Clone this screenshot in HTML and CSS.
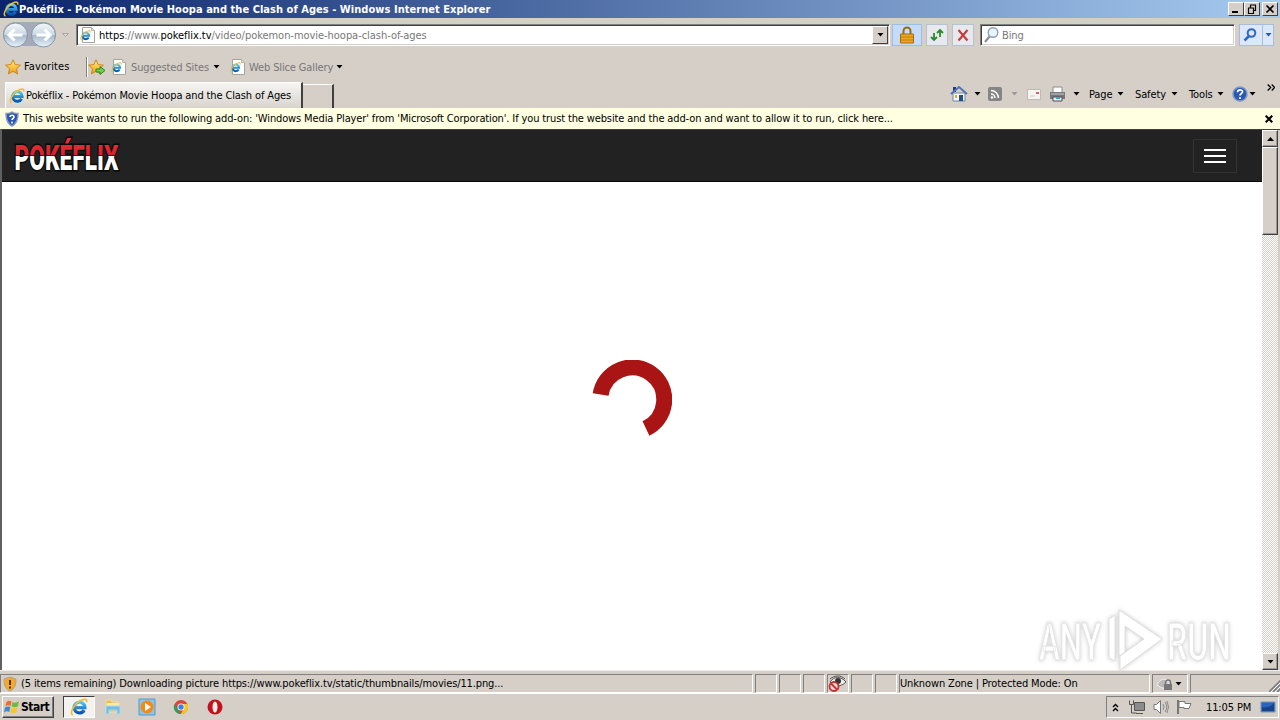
FILE: index.html
```html
<!DOCTYPE html>
<html lang="en">
<head>
<meta charset="utf-8">
<title>Pokéflix - Pokémon Movie Hoopa and the Clash of Ages</title>
<link rel="stylesheet" href="styles.css">
</head>
<body>
<svg width="0" height="0" class="defs">
  <defs>
    <linearGradient id="blue" x1="0" y1="0" x2="0" y2="1"><stop offset="0" stop-color="#55c8f8"/><stop offset="1" stop-color="#0755b0"/></linearGradient>
    <linearGradient id="gold" x1="0" y1="0" x2="0" y2="1"><stop offset="0" stop-color="#fff18a"/><stop offset="1" stop-color="#f29a0a"/></linearGradient>
    <linearGradient id="orb" x1="0" y1="0" x2="0" y2="1"><stop offset="0" stop-color="#f4f8fb"/><stop offset=".48" stop-color="#cbd7e2"/><stop offset=".5" stop-color="#a3b6c8"/><stop offset="1" stop-color="#eaf4fc"/></linearGradient>
    <linearGradient id="duo" gradientUnits="userSpaceOnUse" x1="0" y1="4" x2="0" y2="36"><stop offset="0" stop-color="#e8323a"/><stop offset=".49" stop-color="#d3222c"/><stop offset=".49" stop-color="#222"/><stop offset=".54" stop-color="#222"/><stop offset=".54" stop-color="#fff"/><stop offset="1" stop-color="#fff"/></linearGradient>
    <symbol id="ie" viewBox="0 0 16 16"><path d="M12.600 10.800A4.800 4.800 0 1 1 13.200 8.500H5" fill="none" stroke="url(#blue)" stroke-width="2.900"/><path d="M2.500 15C-1 14 3.500 5 10 2c3.500-1.600 5.500-1 4.600 1.800" fill="none" stroke="#f3bd28" stroke-width="1.500"/></symbol>
    <symbol id="page" viewBox="0 0 16 16"><path d="M2.500.500h9l3 3v12h-12z" fill="#fff" stroke="#a5a39d"/><path d="M11.500.500v3h3" fill="#ddd" stroke="#b5b3ad"/><use href="#ie" x="0" y="3" width="11" height="11"/></symbol>
    <symbol id="star" viewBox="0 0 16 16"><path d="M8 .8l2.200 4.800 5.200.600-3.900 3.500 1.100 5.200L8 12.300l-4.600 2.600 1.100-5.200L.6 6.200l5.200-.6z" fill="url(#gold)" stroke="#cf8612"/></symbol>
    <symbol id="down" viewBox="0 0 7 4"><path d="M.5 0h6L3.500 3.500z" fill="currentColor"/></symbol>
  </defs>
</svg>

<header class="titlebar">
  <svg class="i16"><use href="#ie"/></svg>
  <span class="title">Pokéflix - Pokémon Movie Hoopa and the Clash of Ages - Windows Internet Explorer</span>
  <div class="winbtns">
    <span class="wb"><svg width="12" height="10"><path d="M2 8h6" stroke="#000" stroke-width="2"/></svg></span>
    <span class="wb"><svg width="12" height="10"><path d="M4 1h6M4.500 1v3M9.500 1v5.500H8M2 4h6M2.500 4v5.500h5V4" fill="none" stroke="#000" stroke-width="1.200"/></svg></span>
    <span class="wb gap"><svg width="12" height="10"><path d="M2.500 1.500l7 7m0-7l-7 7" stroke="#000" stroke-width="1.700"/></svg></span>
  </div>
</header>

<div class="navrow">
  <svg class="orbs" width="74" height="30">
    <rect x="3" y="2" width="53" height="24" rx="12" fill="#a6aab8"/>
    <circle cx="15.500" cy="15" r="12" fill="url(#orb)" stroke="#8796a8"/><circle cx="43.500" cy="15" r="12" fill="url(#orb)" stroke="#8796a8"/>
    <path d="M22.500 15h-13m5-5.500L9 15l5.500 5.500" fill="none" stroke="#fff" stroke-width="3"/><path d="M36.500 15h13m-5-5.500L50 15l-5.500 5.500" fill="none" stroke="#fff" stroke-width="3"/>
    <path d="M62.500 13.500h6l-3 3z" fill="#ddd" stroke="#aaa69f"/>
  </svg>
  <div class="address field">
    <svg class="i16"><use href="#page"/></svg>
    <span class="url"><b>https</b>://www.<b>pokeflix.tv</b>/video/pokemon-movie-hoopa-clash-of-ages</span>
    <span class="drop"><svg width="7" height="4"><use href="#down"/></svg></span>
  </div>
  <span class="tool lock"><svg width="16" height="18"><path d="M4.500 8V5a3.500 3.500 0 0 1 7 0v3" fill="none" stroke="#9a6a10" stroke-width="2"/><path d="M1.500 8h13v9h-13z" fill="#eda71f" stroke="#a66c0b"/><path d="M2 11h12M2 14h12" stroke="#c57d0c"/></svg></span>
  <span class="tool"><svg width="16" height="16"><path d="M5 10V3M2 6l3-3 3 3M11 6v7M8 10l3 3 3-3" transform="matrix(-1 0 0 1 16 0)" fill="none" stroke="#2b8a2e" stroke-width="1.800"/></svg></span>
  <span class="tool"><svg width="16" height="16"><path d="M3.500 3l9 10.500M12.500 3l-9 10.500" stroke="#c93c3c" stroke-width="2.200"/></svg></span>
  <div class="search field">
    <svg width="17" height="18"><circle cx="10" cy="6.500" r="4.800" fill="#e7f4fd" stroke="#8ca0b4" stroke-width="1.400"/><path d="M6.500 10.500L2 16" stroke="#8b8b8b" stroke-width="2"/></svg>
    <span>Bing</span>
  </div>
  <span class="go"><svg width="22" height="18"><circle cx="11.500" cy="7" r="3.800" fill="none" stroke="#2c67c9" stroke-width="2"/><path d="M9 10l-4.500 4.500" stroke="#2c67c9" stroke-width="2.500"/></svg><i><svg width="7" height="4"><use href="#down"/></svg></i></span>
</div>

<div class="favrow">
  <svg class="i16"><use href="#star"/></svg>
  <span class="favs">Favorites</span>
  <span class="sep"></span>
  <svg class="i18" viewBox="0 0 18 16"><use href="#star" width="16" height="16"/><path d="M8 10h4V7.500l5 4-5 4V13H8z" fill="#6ed04b" stroke="#268b22"/></svg>
  <svg class="i16 pg"><use href="#page"/></svg>
  <span class="sugg">Suggested Sites</span>
  <svg width="7" height="4"><use href="#down"/></svg>
  <svg class="i16 pg2"><use href="#page"/></svg>
  <span class="slice">Web Slice Gallery</span>
  <svg width="7" height="4"><use href="#down"/></svg>
</div>

<div class="tabrow">
  <div class="tab"><svg class="i16"><use href="#ie"/></svg><span>Pokéflix - Pokémon Movie Hoopa and the Clash of Ages</span></div>
  <div class="newtab"></div>
  <div class="cmds">
    <svg width="18" height="18"><path d="M3 8h12v8H3z" fill="#f4f7fb" stroke="#7284a4"/><path d="M3 2h3v5H3z" fill="#26377d"/><path d="M1 9l8-7 8 7" fill="none" stroke="#5275af" stroke-width="2"/><path d="M9 10h4v6H9z" fill="#24517c"/><path d="M5 10h2v3H5z" fill="#e8a52d"/></svg>
    <svg class="c1" width="7" height="4"><use href="#down"/></svg>
    <svg class="c2" width="14" height="14"><rect width="14" height="14" rx="2" fill="#858585"/><path d="M3 7a4 4 0 0 1 4 4M3 3.500A7.500 7.500 0 0 1 10.500 11" fill="none" stroke="#fff" stroke-width="1.500"/><circle cx="4" cy="10.500" r="1.300" fill="#fff"/></svg>
    <svg class="c3" width="7" height="4"><use href="#down"/></svg>
    <svg class="c4" width="14" height="11"><path d="M.5.500h13v10H.5z" fill="#f5f4f3" stroke="#bdb9b4"/><path d="M9 3h3v2H9z" fill="#d4606c"/><path d="M3 7h5" stroke="#c8c8c8"/></svg>
    <svg class="c5" width="17" height="16"><path d="M4 1h9v6H4z" fill="#fff" stroke="#8b8b8b"/><path d="M1 6h15v7H1z" fill="#77797c"/><path d="M2 8h13" stroke="#c6cacc"/><path d="M4 11h9v4H4z" fill="#eee" stroke="#4d5256"/><path d="M7 12h4" stroke="#38a2d5" stroke-width="2"/></svg>
    <svg class="c6" width="7" height="4"><use href="#down"/></svg>
    <span class="cpage">Page</span><svg width="7" height="4"><use href="#down"/></svg>
    <span class="csafe">Safety</span><svg width="7" height="4"><use href="#down"/></svg>
    <span class="ctool">Tools</span><svg width="7" height="4"><use href="#down"/></svg>
    <svg class="c7" width="16" height="16"><circle cx="8" cy="8" r="7" fill="#2858b8" stroke="#8599bf" stroke-width="1.500"/><path d="M5.500 6.300C5.500 3 10.700 3.300 10.500 6 10.400 7.500 8 7.500 8 9.500M8 11v2" fill="none" stroke="#fff" stroke-width="1.700"/></svg>
    <svg width="7" height="4"><use href="#down"/></svg>
    <svg class="chev" width="8" height="7"><path d="M.7.500l3 3-3 3M4.700.500l3 3-3 3" fill="none" stroke="#000" stroke-width="1.300"/></svg>
  </div>
</div>

<div class="infobar">
  <svg class="i16" viewBox="0 0 16 16"><path d="M8 1c2 1.500 4 1.700 6 1.500 0 6-1 10-6 12.500C3 12.500 2 8.500 2 2.500 4 2.700 6 2.500 8 1z" fill="#2a57b6" stroke="#8b9ab8" stroke-width="1.500"/><path d="M6 6c0-2.500 4-2.300 4 0 0 1.500-2 1.500-2 3M8 10.500v2" fill="none" stroke="#fff" stroke-width="1.600"/></svg>
  <span>This website wants to run the following add-on: 'Windows Media Player' from 'Microsoft Corporation'. If you trust the website and the add-on and want to allow it to run, click here...</span>
  <svg class="x" width="8" height="8"><path d="M.7.700l6.600 6.600m0-6.600L.7 7.300" stroke="#000" stroke-width="2.100"/></svg>
</div>

<div class="view">
  <main class="site">
    <nav class="navbar">
      <svg class="logo" width="110" height="42"><text x="1.500" y="34.500" textLength="104" lengthAdjust="spacingAndGlyphs">POKÉFLIX</text></svg>
      <button class="burger"><i></i><i></i><i></i></button>
    </nav>
    <svg class="spinner" width="80" height="80"><path d="M8.650 34.470A32 32 0 1 1 53.960 68.400" fill="none" stroke="#a91414" stroke-width="16"/></svg>
    <svg class="watermark" width="204" height="70">
      <g class="wmtext"><text x="4" y="52" textLength="62" lengthAdjust="spacingAndGlyphs">ANY</text><text x="132" y="52" textLength="64" lengthAdjust="spacingAndGlyphs">RUN</text></g>
      <path class="wmshape" fill-rule="evenodd" d="M74 50V11l6-4v46zM84 2l43 29-42 31V48l24-17-19-13v26l-6 4z"/>
    </svg>
  </main>
  <aside class="scroll">
    <span class="sbtn"><svg width="7" height="4"><path d="M0 4h7L3.500 0z"/></svg></span>
    <span class="thumb"></span>
    <span class="sbtn end"><svg width="7" height="4"><use href="#down"/></svg></span>
  </aside>
</div>

<div class="status">
  <div class="cell msg"><svg class="i16" viewBox="0 0 16 16"><path d="M8 1l6 2c0 6-1 9.500-6 12C3 12.500 2 9 2 3z" fill="#f4aa22" stroke="#a8a29a"/><path d="M8 4v5M8 10.500v2" stroke="#5c2d00" stroke-width="2"/></svg><span>(5 items remaining) Downloading picture https://www.pokeflix.tv/static/thumbnails/movies/11.png...</span></div>
  <div class="cell sm"></div><div class="cell sm"></div><div class="cell sm"></div>
  <div class="cell sm"><svg width="20" height="18"><path d="M2 7c4-6 11-6 16 0-5 5-11 5-16 0z" fill="#eee" stroke="#555"/><circle cx="10" cy="6" r="3" fill="#333"/><path d="M2 4c5-4 11-4 15 0" fill="none" stroke="#555"/><circle cx="6" cy="11.500" r="4.500" fill="#f3dede" stroke="#c9302c" stroke-width="1.800"/><path d="M3 8.500l6 6" stroke="#c9302c" stroke-width="1.800"/></svg></div>
  <div class="cell sm"></div><div class="cell sm"></div>
  <div class="cell zone"><span>Unknown Zone | Protected Mode: On</span></div>
  <div class="cell prot"><svg width="18" height="16"><path d="M1 9c3-6 7-7 11-4v7H6z" fill="#b9b9b9" stroke="#efefef"/><path d="M9.500 9V6.500a2.500 2.500 0 0 1 5 0V9" fill="none" stroke="#777" stroke-width="1.400"/><path d="M8 8h8v6H8z" fill="#777"/></svg><svg class="d" width="7" height="4"><use href="#down"/></svg></div>
  <div class="cell last"><svg width="12" height="12"><path d="M0 12L12 0M4 12l8-8M8 12l4-4" stroke="#808080" stroke-width="1.800"/><path d="M2 12L12 2M6 12l6-6" stroke="#fff"/></svg></div>
</div>

<footer class="taskbar">
  <div class="start"><svg width="16" height="16"><path d="M2.500 3Q5 1 7.500 2.500L6.500 7Q4 5.500 1.300 7.500z" fill="#ef6a2f"/><path d="M8.500 3Q11 4.500 15 2.500L13.800 7.500Q11 9 7.500 7.500z" fill="#75b83c"/><path d="M1 8.500Q4 6.700 6.300 8L5.300 13Q2.500 11.500 0 13.500z" fill="#3e87d8"/><path d="M7.300 8.700Q10 10 13.500 8.500L12.300 13.500Q9 15 6.200 13.500z" fill="#f8c536"/></svg><span>Start</span></div>
  <div class="task"><svg width="18" height="18"><use href="#ie"/></svg></div>
  <svg class="t1" width="18" height="18"><path d="M2 2h5l1 2h7v10H2z" fill="#e9bd56" stroke="#f6e09a"/><path d="M3 5h12v5H3z" fill="#fbe9a6"/><path d="M2 8h14v8h-3v-4H5v4H2z" fill="#75bce0" stroke="#a7dcf2"/></svg>
  <svg class="t2" width="18" height="18"><path d="M1 1h16v16H1z" fill="#8cc4e8" stroke="#4d9cd0"/><circle cx="9" cy="9" r="6.500" fill="#f48a14"/><path d="M7 5l6 4-6 4z" fill="#fff"/></svg>
  <svg class="t3" width="16" height="16"><circle cx="8" cy="8" r="7" fill="#df4436"/><path d="M1.500 5L6 12l2 3A7 7 0 0 1 1.500 5z" fill="#26a15a"/><path d="M8 5h6.400A7 7 0 0 1 8 15l3-6z" fill="#f8c91c"/><circle cx="8" cy="8" r="3.500" fill="#fff"/><circle cx="8" cy="8" r="2.700" fill="#3e80e8"/></svg>
  <svg class="t4" width="16" height="16"><ellipse cx="8" cy="8" rx="7.500" ry="7.500" fill="#c3121c"/><ellipse cx="8" cy="8" rx="2.500" ry="5.500" fill="#eee"/></svg>
  <div class="tray">
    <svg class="y0" width="7" height="9"><path d="M1 4l2.500-2.500L6 4M1 8l2.500-2.500L6 8" fill="none" stroke="#000" stroke-width="1.400"/></svg>
    <svg class="y1" width="16" height="16"><path d="M5.500 3.500h10v8h-10z" fill="#8b8b8b" stroke="#fff"/><path d="M5.500 3.500h10v8h-10zM7 14.500h7M.5 1.500v4h4v-4M2.500 5v9h5" fill="none" stroke="#555"/></svg>
    <svg class="y2" width="16" height="16"><path d="M1 5.500h2.500L7.500 1.500v13L3.500 10.500H1z" fill="#fff" stroke="#777"/><path d="M10 5q2 3 0 6M12 3q3.500 5 0 10M14 2q3 6 0 12" fill="none" stroke="#888"/></svg>
    <svg class="y3" width="17" height="16"><path d="M2 1v14" stroke="#777" stroke-width="2"/><path d="M3 2.500h6v2h6l-2 5H8v-1H3z" fill="#fff" stroke="#777"/></svg>
    <span class="clock">11:05 PM</span>
    <svg class="y4" width="16" height="13"><path d="M1 1h14v10H1z" fill="#2865c1" stroke="#7792b5"/><path d="M2 6q7 2 12-4v8H2z" fill="#174389"/></svg>
  </div>
</footer>
</body>
</html>
```
FILE: styles.css
```css
*{box-sizing:border-box}
body{margin:0;width:1280px;height:720px;overflow:hidden;display:flex;flex-direction:column;background:#d5cfc8;color:#000;font:11px/14px "DejaVu Sans Condensed","DejaVu Sans",sans-serif;font-stretch:condensed;letter-spacing:-.13px}
.defs{position:absolute}
svg{display:block;flex:none}
span{white-space:nowrap}
.i16{width:16px;height:16px}
.i18{width:18px;height:16px}
.titlebar{height:18px;flex:none;display:flex;align-items:center;padding:0 2px 0 3px;background:linear-gradient(90deg,#0a246a,#a6caf0)}
.title{color:#fff;font-weight:bold;letter-spacing:.04px;flex:1;padding-top:1px}
.winbtns{display:flex}
.wb{width:16px;height:14px;background:#d5cfc8;border:1px solid;border-color:#fff #404040 #404040 #fff;display:flex;align-items:center;justify-content:center}
.gap{margin-left:2px}
.navrow{height:36px;flex:none;display:flex;align-items:flex-start;padding:6px 0 0 0}
.orbs{margin-top:-4px;width:76px}
.field{background:#fff;height:22px;border:1px solid;border-color:#808080 #fff #fff #808080;box-shadow:inset 1px 1px #404040,inset -1px -1px #d5cfc8;display:flex;align-items:center;color:#777}
.field>span{padding-top:2px}
.address{width:814px;padding:0 1px 0 3px}
.url{margin-left:3px;flex:1;letter-spacing:-.04px}
.url b{font-weight:normal;color:#000}
.field>.drop{width:16px;height:18px;padding:0;background:#d5cfc8;border:1px solid;border-color:#fff #404040 #404040 #fff;display:flex;align-items:center;justify-content:center;color:#000}
.tool{width:22px;height:22px;border:1px solid #b5c2d4;background:#e7e9ed;margin-left:4px;display:flex;align-items:center;justify-content:center}
.tool.lock{width:30px;margin-left:2px;background:#c5dbfa;border-color:#9dbde9}
.search{width:255px;margin-left:6px;padding-left:2px;gap:2px}
.go{margin-left:4px;width:35px;height:22px;border:1px solid #a8bcdb;background:#dce7f7;display:flex;align-items:center}
.go i{width:12px;height:20px;border-left:1px solid #a8bcdb;color:#225ab0;display:flex;align-items:center;justify-content:center}
.favrow{height:26px;flex:none;display:flex;align-items:center;padding-left:5px}
.favs{width:62px;margin-left:3px;letter-spacing:.1px}
.sep{width:2px;height:20px;background:#808080;border-right:1px solid #fff;margin:0 4px 0 0}
.i18{margin-left:-4px}
.pg{margin-left:5px}
.sugg{width:80px;margin:0 2px 0 4px;padding-top:1px;color:#777}
.pg2{margin-left:10px}
.slice{width:85px;margin:0 2px 0 3px;padding-top:1px;color:#777}
.tabrow{height:28px;flex:none;display:flex;align-items:flex-end;padding-left:5px}
.tab{width:298px;height:26px;border:1px solid #fff;border-right:2px solid #404040;border-bottom:0;background:linear-gradient(#f6f5f3,#d8d3cd);display:flex;align-items:center;padding-left:3px;gap:1px}
.tab span{padding-top:1px}
.newtab{width:31px;height:24px;border-top:1px solid #fff;border-right:2px solid #404040;margin-right:616px}
.cmds{height:28px;display:flex;align-items:center;flex:none}
.cmds span{padding-top:1px}
.c1{margin-left:6px}.c2{margin-left:7px}.c3{margin-left:9px;color:#999}.c4{margin-left:9px}.c5{margin-left:8px}.c6{margin-left:7px}
.cpage{margin-left:9px;width:28px}.csafe{margin-left:11px;width:36px}.ctool{margin-left:11px;width:28px}
.c7{margin:0 1px 0 8px}
.chev{margin:-14px 0 0 11px}
.infobar{height:22px;flex:none;background:#ffffe1;border-bottom:1px solid #808080;display:flex;align-items:center;padding:0 7px 0 4px}
.infobar span{margin-left:3px;flex:1;padding-top:1px}
.view{height:541px;flex:none;display:flex;border-left:2px solid #606060;border-top:1px solid #404040;margin-top:-1px}
.site{width:1260px;background:#fff;position:relative;display:flex;flex-direction:column;align-items:center}
.navbar{width:1260px;height:52px;background:#222;border-bottom:1px solid #080808;display:flex;align-items:center;justify-content:space-between;padding:0 25px 0 11px}
.logo{overflow:visible}
.logo text{font:900 35px Roboto,sans-serif;letter-spacing:0;fill:url(#duo);stroke:#090909;stroke-width:3px;paint-order:stroke}
.burger{width:44px;height:34px;background:none;border:1px solid #333;padding:0;display:flex;flex-direction:column;align-items:center;justify-content:center;gap:4px}
.burger i{width:22px;height:2px;background:#fff}
.spinner{margin-top:178px}
.watermark{position:absolute;left:1033px;top:478px;overflow:visible;filter:drop-shadow(0 0 2px #c8c8c8)}
.wmtext{font:500 52px Roboto,sans-serif;letter-spacing:0;fill:#fff;stroke:#e2e2e2;stroke-width:.8px}
.wmshape{fill:#fff;stroke:#e0e0e0;stroke-width:1px}
.scroll{width:16px;display:flex;flex-direction:column;background:repeating-conic-gradient(#d5cfc8 0 25%,#fff 0 50%) 0 0/2px 2px}
.sbtn,.thumb{width:16px;height:17px;background:#d5cfc8;border:1px solid;border-color:#fff #404040 #404040 #fff;box-shadow:inset -1px -1px #999;display:flex;align-items:center;justify-content:center}
.thumb{height:88px}
.end{margin-top:auto}
.status{height:24px;flex:none;border-top:1px solid #eee;padding-top:3px;display:flex;gap:2px;border-bottom:1px solid #fff}
.cell{height:19px;border:1px solid;border-color:#808080 #fff #fff #808080;display:flex;align-items:center;flex:none}
.msg{width:753px;padding-left:1px;gap:3px}
.sm{width:22px}
.zone{width:251px;padding-left:0}
.prot{width:36px;padding-left:3px}.prot .d{margin-left:1px}
.last{width:92px;justify-content:flex-end;align-items:flex-end}
.taskbar{height:26px;flex:none;display:flex;align-items:center;padding-left:2px}
.start{width:52px;height:22px;border:1px solid;border-color:#fff #404040 #404040 #fff;box-shadow:inset -1px -1px #808080;font-weight:bold;font-size:12px;display:flex;align-items:center;padding-left:1px;gap:1px;letter-spacing:-.5px}
.task{width:32px;height:22px;margin-left:9px;border:1px solid;border-color:#404040 #fff #fff #404040;background:#f4f2f0;display:flex;align-items:center;justify-content:center}
.t1{margin-left:9px}.t2{margin-left:16px}.t3{margin-left:17px}.t4{margin-left:18px}
.tray{width:173px;height:22px;margin-left:auto;margin-right:1px;border:1px solid;border-color:#808080 #fff #fff #808080;display:flex;align-items:center}
.y0{margin-left:5px}.y1{margin-left:10px}.y2{margin-left:8px}.y3{margin-left:7px}
.clock{margin-left:13px;width:46px;padding-top:1px}
.y4{margin-left:8px}
```
